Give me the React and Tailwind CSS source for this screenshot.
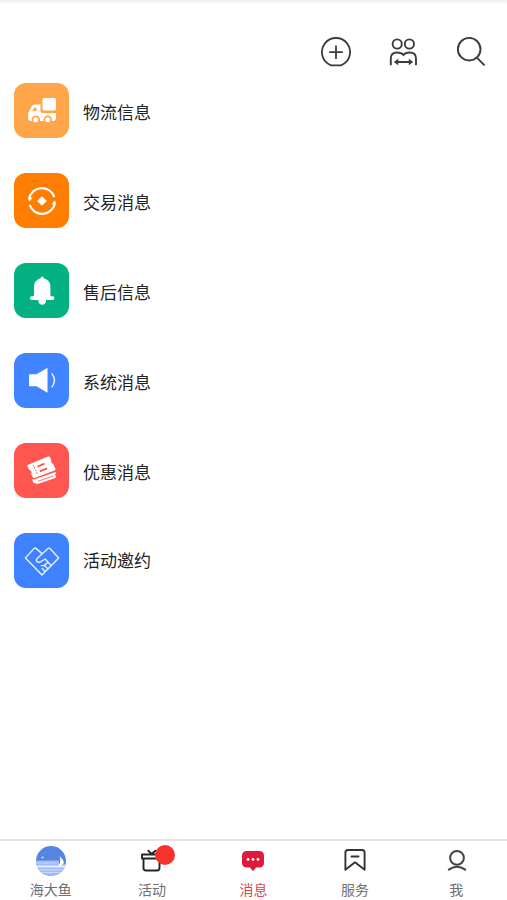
import React from "react";

function TruckIcon() {
  return (
    <svg viewBox="0 0 55 55" className="h-full w-full" aria-hidden="true">
      <rect x="28.5" y="15" width="13.5" height="12.5" rx="1.8" fill="#fff" />
      <path
        d="M20.5 21.5H26.5V28.2Q26.5 30 28.3 30H42V34.5Q42 38 39 38H17Q14.2 38 14.2 35.5V30.5Q14.2 29 15.5 28L17.6 23.4Q18.5 21.5 20.5 21.5Z"
        fill="#fff"
      />
      <path d="M18.5 28L20 24.7H22.5V28Z" fill="#ffa64a" />
      <circle cx="21.8" cy="36.8" r="3.4" fill="#fff" stroke="#ffa64a" strokeWidth="1.7" />
      <circle cx="33.8" cy="36.8" r="3.4" fill="#fff" stroke="#ffa64a" strokeWidth="1.7" />
    </svg>
  );
}

function TradeIcon() {
  return (
    <svg viewBox="0 0 55 55" className="h-full w-full" aria-hidden="true">
      <g fill="none" stroke="#fff" strokeWidth="2.2">
        <path d="M15.2 25.3A13 13 0 0 1 40.3 24.2" />
        <path d="M40.8 30.7A13 13 0 0 1 15.7 31.8" />
      </g>
      <path d="M13.6 25.2L18.6 24.4L15.4 28.6ZM42.4 30.8L37.4 31.6L40.6 27.4Z" fill="#fff" />
      <path d="M28 23.2L32.8 28L28 32.8L23.2 28Z" fill="#fff" />
    </svg>
  );
}

function BellIcon() {
  return (
    <svg viewBox="0 0 55 55" className="h-full w-full" aria-hidden="true">
      <path
        d="M28.2 13.5Q29.6 13.5 29.8 15.2Q36.4 16.8 36.4 24V33.2H38.8Q40.4 33.4 40.4 35Q40.4 37 38.4 37H18Q16 37 16 35Q16 33.4 17.6 33.2H20V24Q20 16.8 26.6 15.2Q26.8 13.5 28.2 13.5Z"
        fill="#fff"
      />
      <path d="M24.4 37H32V38.5Q31 41.8 28.2 41.8T24.4 38.5Z" fill="#fff" />
    </svg>
  );
}

function SpeakerIcon() {
  return (
    <svg viewBox="0 0 55 55" className="h-full w-full" aria-hidden="true">
      <path d="M16 21.3H22.5L33.5 14.7V39.7L22.5 33.2H16Q15 33.2 15 32V22.5Q15 21.3 16 21.3Z" fill="#fff" />
      <path d="M37.7 20.3Q43.3 27.3 37.7 34.3" fill="none" stroke="#fff" strokeWidth="1.3" />
    </svg>
  );
}

function CouponIcon() {
  return (
    <svg viewBox="0 0 55 55" className="h-full w-full" aria-hidden="true">
      <path
        d="M14.2 21.8L34 13.6Q35.5 13.2 36.1 14.4L37.4 17.6Q36.2 19.6 39.2 21L41.4 25.8Q41.7 27.1 40.5 27.6L20.5 35Q19.2 35.3 18.6 34L17.2 31Q18.6 28.4 15.4 27L13.4 23.4Q13 22.2 14.2 21.8Z"
        fill="#fff"
      />
      <path
        d="M18.2 36.2L20 36.6L41.6 29V30.8Q40.7 32 42 33.6V34.8L25 40.5Q22 41.2 20 40Q18.6 39 18.2 36.2Z"
        fill="#fff"
      />
      <path d="M19.2 21.8L23.8 32.2" fill="none" stroke="#ff564f" strokeWidth="1" strokeDasharray="1.6 1.2" />
      <path d="M23.6 23.6L30.4 20.6M25.8 28.4L33 25.4" fill="none" stroke="#ff564f" strokeWidth="1.8" />
      <path d="M24 38.2L39.5 33" fill="none" stroke="#ff564f" strokeWidth="0.8" />
    </svg>
  );
}

function HandshakeIcon() {
  return (
    <svg viewBox="0 0 55 55" className="h-full w-full" aria-hidden="true">
      <g fill="none" stroke="#e8f1ff" strokeWidth="1.4" strokeLinejoin="round" strokeLinecap="round">
        <path d="M28 20.6L22 15.4Q21 14.7 20 15.6L11.4 25L28 42L44.7 25L36 15.6Q35 14.7 34 15.6L22.6 26Q21.8 27.4 23 28.6Q24.4 29.8 26.4 28.8L31.2 26L34 29.2L30 32.6H27.4" />
        <path d="M34 29.2L37.2 32.4M30.4 32.6L33.8 35.8M28.2 35.6L31 38.6" />
      </g>
    </svg>
  );
}

const messages = [
  { label: "物流信息", color: "bg-[#ffa64a]", Icon: TruckIcon },
  { label: "交易消息", color: "bg-[#ff7d00]", Icon: TradeIcon },
  { label: "售后信息", color: "bg-[#04b183]", Icon: BellIcon },
  { label: "系统消息", color: "bg-[#4085ff]", Icon: SpeakerIcon },
  { label: "优惠消息", color: "bg-[#ff564f]", Icon: CouponIcon },
  { label: "活动邀约", color: "bg-[#3f82ff]", Icon: HandshakeIcon, raised: true },
];

function HomeIcon() {
  return (
    <svg viewBox="0 0 32 32" className="size-8" aria-hidden="true">
      <defs>
        <clipPath id="home-disc">
          <circle cx="16" cy="16" r="15" />
        </clipPath>
      </defs>
      <g clipPath="url(#home-disc)">
        <rect width="32" height="32" fill="#5684e3" />
        <path d="M0 15.5H24V19H32V32H0Z" fill="#9dbbf5" />
        <path d="M0 17.2H22V18.8H0Z" fill="#b9cefa" />
        <path d="M0 20.5H32V22.5H0Z" fill="#e6eefd" />
        <path d="M0 24.2H32V25.4H0ZM0 27H32V28H0Z" fill="#c9dafb" />
        <path d="M24.5 11Q28.5 14.5 29 18Q26 21.5 23 21Q26.5 17 24.5 11Z" fill="#fff" />
      </g>
      <circle cx="7.5" cy="12.5" r="1.1" fill="#d7e4ff" />
    </svg>
  );
}

function GiftIcon() {
  return (
    <svg viewBox="0 0 32 32" className="size-8" aria-hidden="true">
      <g fill="none" stroke="#252525" strokeWidth="1.9" strokeLinejoin="round" strokeLinecap="round">
        <path d="M6 9.5H25V13.5H6ZM7.5 13.5V23Q7.5 25.5 10 25.5H21Q23.5 25.5 23.5 23V13.5M12.2 5.7L15.5 9L19.5 5.7" />
      </g>
    </svg>
  );
}

function ChatIcon() {
  return (
    <svg viewBox="0 0 32 32" className="size-8" aria-hidden="true">
      <path
        d="M10 6H22Q27 6 27 11V17.5Q27 22.5 22 22.5H19L16.6 25.5Q16 26.2 15.4 25.5L13 22.5H10Q5 22.5 5 17.5V11Q5 6 10 6Z"
        fill="#e0193a"
      />
      <circle cx="11" cy="14.4" r="1.4" fill="#fff" />
      <circle cx="16" cy="14.4" r="1.4" fill="#fff" />
      <circle cx="21" cy="14.4" r="1.4" fill="#fff" />
    </svg>
  );
}

function ServiceIcon() {
  return (
    <svg viewBox="0 0 32 32" className="size-8" aria-hidden="true">
      <g fill="none" stroke="#333" strokeWidth="1.9" strokeLinejoin="round" strokeLinecap="round">
        <path d="M9 5H23Q25.6 5 25.6 7.6V24.8L16 17.2L6.4 24.8V7.6Q6.4 5 9 5ZM12.5 11.5H19.5" />
      </g>
    </svg>
  );
}

function ProfileIcon() {
  return (
    <svg viewBox="0 0 32 32" className="size-8" aria-hidden="true">
      <g fill="none" stroke="#444" strokeWidth="2" strokeLinecap="round">
        <circle cx="17" cy="12.8" r="6.9" />
        <path d="M8.8 24.6Q17 18.9 25.2 24.6" />
      </g>
    </svg>
  );
}

const tabs = [
  { label: "海大鱼", Icon: HomeIcon },
  { label: "活动", Icon: GiftIcon, badge: true },
  { label: "消息", Icon: ChatIcon, active: true },
  { label: "服务", Icon: ServiceIcon },
  { label: "我", Icon: ProfileIcon },
];

function Toolbar() {
  return (
    <header className="flex items-center justify-end gap-9 pr-[19px] pt-8">
      <button type="button" aria-label="添加" className="size-8">
        <svg viewBox="0 0 32 32" className="size-8" fill="none" stroke="#3c3c3c" strokeWidth="1.8" strokeLinecap="round">
          <path d="M11 29.3A14.1 14.1 0 1 1 21 29.3Z" strokeLinejoin="round" />
          <path d="M16 10.2V22.2M10 16.2H22" />
        </svg>
      </button>
      <button type="button" aria-label="联系人" className="size-8">
        <svg viewBox="0 0 32 32" className="size-8" fill="none" stroke="#3c3c3c" strokeWidth="1.9">
          <circle cx="9.2" cy="8" r="4.6" />
          <circle cx="21.4" cy="8" r="4.6" />
          <path d="M2.8 29.2V22.5Q2.8 16.5 9 16.5Q13.5 16.5 15.4 19Q17.3 16.5 21.8 16.5Q28 16.5 28 22.5V29.2" />
          <path d="M8.5 26H22.5" strokeWidth="2" />
          <path d="M10.2 22.8V29.2L5.8 26ZM20.8 22.8V29.2L25.2 26Z" fill="#3c3c3c" stroke="none" />
        </svg>
      </button>
      <button type="button" aria-label="搜索" className="size-8">
        <svg viewBox="0 0 32 32" className="size-8" fill="none" stroke="#3c3c3c" strokeWidth="1.9" strokeLinecap="round">
          <circle cx="13.2" cy="13.2" r="11.3" />
          <path d="M20.9 21.6L28 28.8" />
        </svg>
      </button>
    </header>
  );
}

export default function App() {
  return (
    <div className="flex min-h-screen flex-col bg-white font-['Noto_Sans_CJK_SC',sans-serif]">
      <div className="h-1 bg-linear-to-b from-[#efefef] to-white" />
      <Toolbar />
      <main className="flex-1 pb-6 pt-[15px]">
        <ul className="flex flex-col gap-[35px] px-[14px]">
          {messages.map(({ label, color, Icon, raised }) => (
            <li key={label}>
              <a href="#" className="flex items-center gap-[14px]">
                <span className={`size-[55px] shrink-0 rounded-xl ${color}`}>
                  <Icon />
                </span>
                <span className={`text-[17px] leading-6 text-[#222] ${raised ? "pb-0.5" : "pt-0.5"}`}>{label}</span>
              </a>
            </li>
          ))}
        </ul>
      </main>
      <nav className="grid grid-cols-5 border-t-2 border-[#e2e2e2] pt-1">
        {tabs.map(({ label, Icon, badge, active }) => (
          <a key={label} href="#" className="flex flex-col items-center">
            <span className="relative">
              <Icon />
              {badge && <span className="absolute right-[-7px] top-0 size-5 rounded-full bg-[#f5322d]" />}
            </span>
            <span className={`pt-0.5 pb-px text-[14px] leading-5 ${active ? "text-[#e0434f]" : "text-[#707070]"}`}>{label}</span>
          </a>
        ))}
      </nav>
    </div>
  );
}
